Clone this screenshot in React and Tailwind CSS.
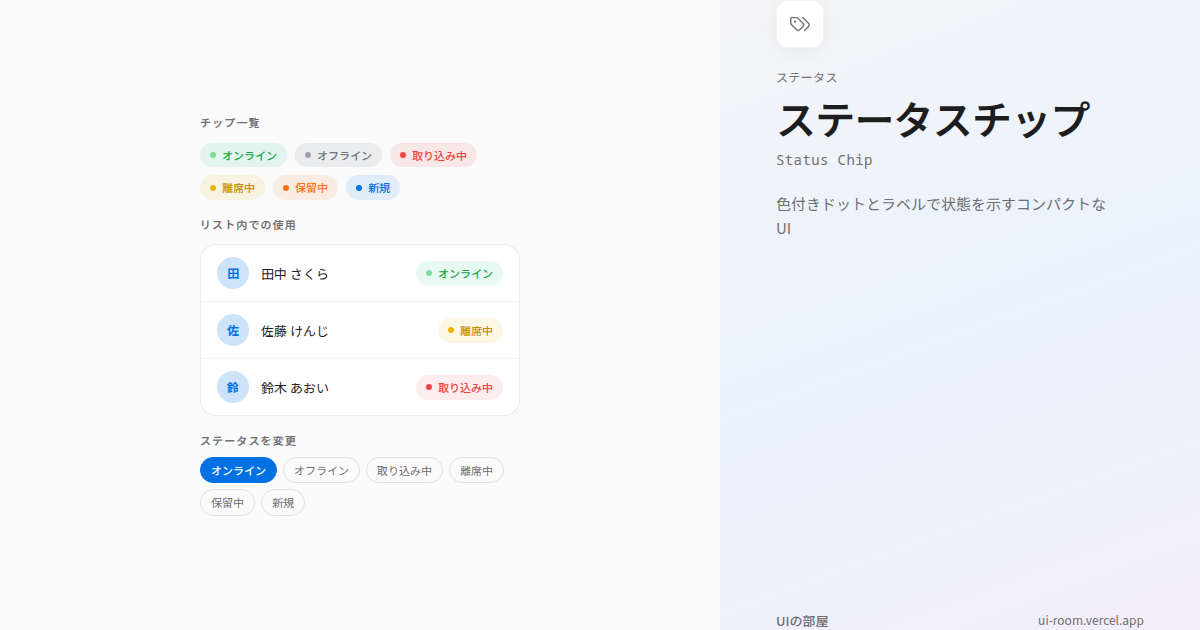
const chips = [
  { name: "オンライン", chip: "bg-[#22c58a]/11 text-[#16a34a]", dot: "bg-[#7bdb9c]" },
  { name: "オフライン", chip: "bg-[#6b7280]/10 text-[#6b7280]", dot: "bg-[#9ca3af]" },
  { name: "取り込み中", chip: "bg-[#ef4444]/10 text-[#ef4444]", dot: "bg-[#ef4444]" },
  { name: "離席中", chip: "bg-[#eab308]/10 text-[#ca8a04]", dot: "bg-[#eab308]" },
  { name: "保留中", chip: "bg-[#f97316]/10 text-[#f97316]", dot: "bg-[#f97316]" },
  { name: "新規", chip: "bg-[#0071e3]/10 text-[#0071e3]", dot: "bg-[#0071e3]" },
];

const people = [
  { initial: "田", name: "田中 さくら", status: 0 },
  { initial: "佐", name: "佐藤 けんじ", status: 3 },
  { initial: "鈴", name: "鈴木 あおい", status: 2 },
];

function Chip({ item }) {
  return (
    <span className={`inline-flex items-center gap-1.5 rounded-full px-2.5 py-1 text-[11px] leading-[16.5px] font-medium ${item.chip}`}>
      <span className={`size-1.5 rounded-full ${item.dot}`} />
      {item.name}
    </span>
  );
}

function Heading({ children }) {
  return <p className="text-[11px] leading-[16.5px] font-semibold tracking-[1.1px] text-[#6e6e73]">{children}</p>;
}

function TagsIcon() {
  return (
    <svg viewBox="0 0 24 24" fill="none" stroke="currentColor" strokeWidth="1.5" strokeLinecap="round" strokeLinejoin="round" className="size-[22px] text-[#6e6e73]">
      <path d="m15 5 6.3 6.3a2.4 2.4 0 0 1 0 3.4L17 19" />
      <path d="M9.586 5.586A2 2 0 0 0 8.172 5H3a1 1 0 0 0-1 1v5.172a2 2 0 0 0 .586 1.414L8.29 18.29a2.426 2.426 0 0 0 3.42 0l3.58-3.58a2.426 2.426 0 0 0 0-3.42z" />
      <circle cx="6.5" cy="9.5" r=".5" fill="currentColor" />
    </svg>
  );
}

export default function App() {
  return (
    <div lang="ja" className="flex h-[630px] w-[1200px] overflow-hidden bg-[#fafafa] font-['Noto_Sans_JP','Noto_Sans_CJK_JP',sans-serif]">
      <main className="flex w-[720px] items-center justify-center">
        <div className="w-80">
          <Heading>チップ一覧</Heading>
          <div className="mt-3 flex flex-wrap gap-2">
            {chips.map((c) => <Chip key={c.name} item={c} />)}
          </div>
          <div className="mt-4"><Heading>リスト内での使用</Heading></div>
          <div className="mt-3 divide-y divide-black/6 rounded-2xl border border-black/8 bg-white">
            {people.map((p) => (
              <div key={p.name} className="flex h-[57px] items-center gap-3 px-4 last:h-14">
                <span className="flex size-8 items-center justify-center rounded-full bg-[#cce3f9] text-xs font-bold text-[#0071e3]">{p.initial}</span>
                <span className="flex-1 text-[13px] text-[#1d1d1f]">{p.name}</span>
                <Chip item={chips[p.status]} />
              </div>
            ))}
          </div>
          <div className="mt-4"><Heading>ステータスを変更</Heading></div>
          <div className="mt-2 flex flex-wrap gap-1.5">
            {chips.map((c, i) => (
              <button key={c.name} className={`rounded-full border px-2.5 py-1 text-[11px] leading-[16.5px] ${i === 0 ? "border-[#0071e3] bg-[#0071e3] font-medium text-white" : "border-black/10 text-[#6e6e73]"}`}>{c.name}</button>
            ))}
          </div>
        </div>
      </main>
      <aside className="flex w-[480px] flex-col bg-[linear-gradient(160deg,#f5f5f7_0%,#e9f2fd_52%,#f3eef9_100%)] px-14">
        <div className="flex size-12 shrink-0 items-center justify-center rounded-xl border border-black/4 bg-white shadow-[0_2px_16px_rgba(0,0,0,0.06)]">
          <TagsIcon />
        </div>
        <p className="mt-5 text-xs leading-[18px] tracking-[0.36px] text-[#6e6e73]">ステータス</p>
        <h1 className="mt-2 text-[40px] leading-[48px] font-semibold tracking-[-0.8px] text-[#1d1d1f]">ステータスチップ</h1>
        <p className="mt-2 font-['Noto_Sans_Mono',monospace] text-sm tracking-[0.4px] text-[#6e6e73]">Status Chip</p>
        <p className="mt-[22px] max-w-[340px] text-[15px] leading-6 text-[#6e6e73]">色付きドットとラベルで状態を示すコンパクトなUI</p>
        <div className="mt-auto flex items-center justify-between text-[13px] text-[#6e6e73]">
          <span className="font-medium">UIの部屋</span><span className="text-xs">ui-room.vercel.app</span>
        </div>
      </aside>
    </div>
  );
}
